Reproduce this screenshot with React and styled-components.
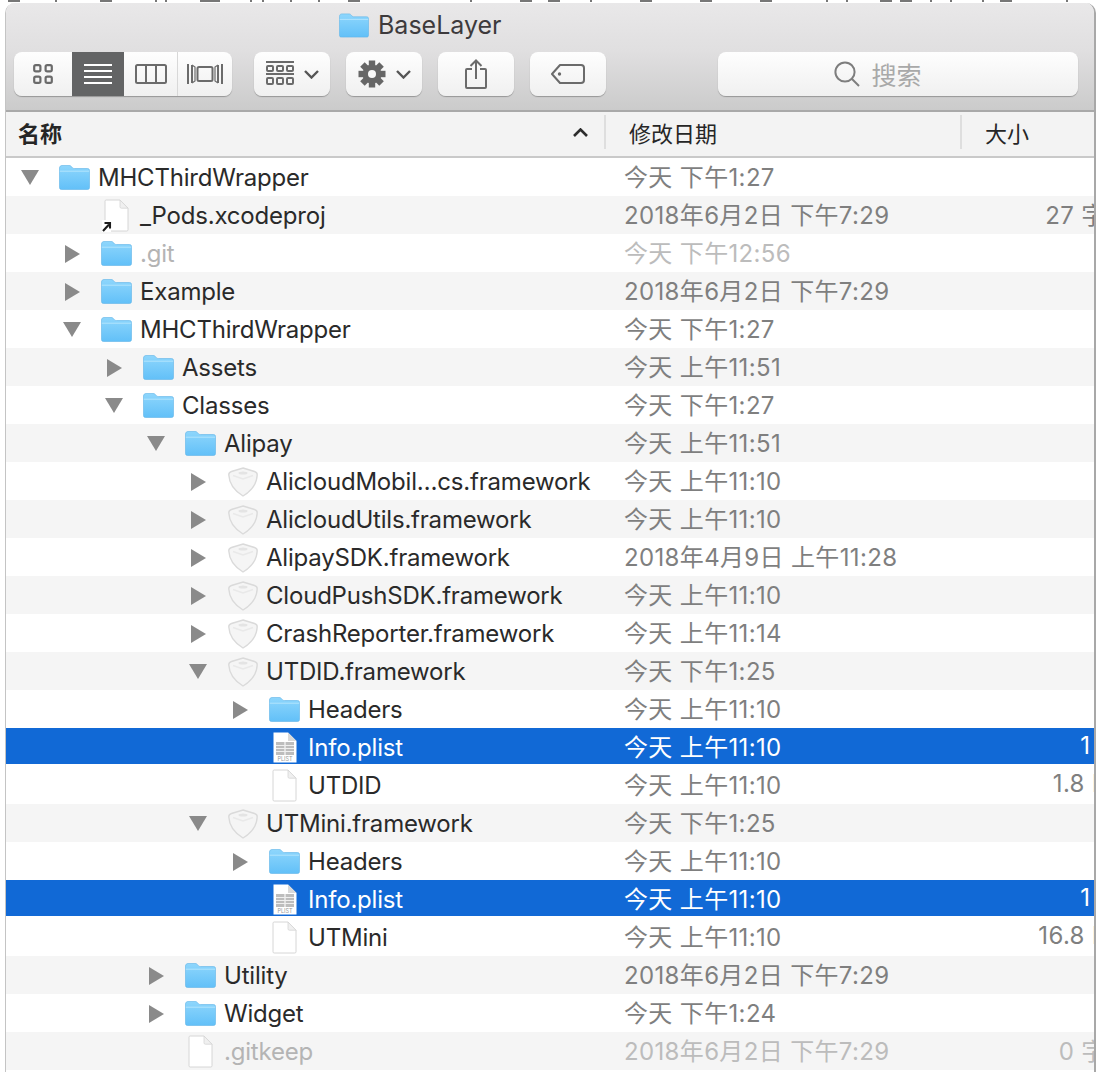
import React from "react";
import styled, { createGlobalStyle } from "styled-components";

const Global = createGlobalStyle`
  html, body { margin: 0; padding: 0; background: #fff; }
  body { font-family: Inter, "Noto Sans CJK SC", sans-serif; }
`;

const Page = styled.div`
  width: 1098px;
  height: 1072px;
  overflow: hidden;
  background: #fff;
  display: flex;
  flex-direction: column;
`;
const Scraps = styled.svg`
  display: block;
  width: 1098px;
  height: 3px;
  flex: none;
`;
const Win = styled.div`
  flex: 1;
  min-height: 0;
  width: 1088px;
  margin-left: 5px;
  border-left: 1px solid #c4c4c4;
  border-right: 2px solid #a8a8a8;
  border-radius: 10px 10px 0 0;
  overflow: hidden;
  background: #fff;
  display: flex;
  flex-direction: column;
`;
const TitleBar = styled.div`
  height: 109px;
  flex: none;
  box-sizing: border-box;
  border-bottom: 2px solid #a9a9a9;
  margin-left: -6px;
  padding-left: 14px;
  background: linear-gradient(180deg, #e9e8e9 0%, #e0dfe0 45%, #cbcbcb 100%);
  display: flex;
  flex-direction: column;
`;
const Title = styled.div`
  height: 49px;
  padding-left: 325px;
  padding-bottom: 5px;
  display: flex;
  align-items: center;
  gap: 9px;
  font-size: 25px;
  color: #3d3a3c;
  box-sizing: border-box;
`;
const Toolbar = styled.div`
  display: flex;
  align-items: flex-start;
  height: 44px;
`;
const Segments = styled.div`
  display: flex;
  width: 218px;
  height: 44px;
  background: linear-gradient(#fefefe, #f0f0f0);
  border-radius: 8px;
  box-shadow: 0 1px 1px rgba(0, 0, 0, 0.28);
  overflow: hidden;
  margin-right: 22px;
`;
const Segment = styled.div`
  width: ${(p) => p.$w}px;
  height: 44px;
  box-sizing: border-box;
  display: flex;
  align-items: center;
  justify-content: center;
  background: ${(p) => (p.$active ? "#636465" : "transparent")};
  color: ${(p) => (p.$active ? "#fff" : "#6b6b6b")};
  border-left: ${(p) => (p.$divided ? "1px solid #d8d8d8" : "none")};
`;
const Btn = styled.div`
  width: 76px;
  height: 44px;
  margin-right: 16px;
  background: linear-gradient(#fefefe, #f0f0f0);
  border-radius: 8px;
  box-shadow: 0 1px 1px rgba(0, 0, 0, 0.28);
  display: flex;
  align-items: center;
  justify-content: center;
  gap: 10px;
  color: #6b6b6b;
`;
const Search = styled(Btn)`
  width: 360px;
  box-sizing: border-box;
  padding-right: 40px;
  margin: 0 0 0 96px;
  gap: 11px;
  font-size: 25px;
  color: #a9a9a9;
`;
const Header = styled.div`
  height: 46px;
  flex: none;
  box-sizing: border-box;
  border-bottom: 2px solid #c9c9c9;
  background: #f3f3f3;
  display: grid;
  grid-template-columns: 600px 356px 1fr;
  font-size: 22px;
  color: #262626;
`;
const HeaderCell = styled.div`
  display: flex;
  align-items: center;
  justify-content: space-between;
  box-sizing: border-box;
  padding: ${(p) => (p.$first ? "0 16px 0 12px" : "0 0 0 23px")};
  margin: 3px 0 7px;
  border-right: ${(p) => (p.$ruled ? "2px solid #dedede" : "none")};
  font-weight: ${(p) => (p.$bold ? 600 : 400)};
`;
const List = styled.div`
  flex: 1;
  min-height: 0;
  overflow: hidden;
`;
const Row = styled.div`
  height: 38px;
  width: 1124px;
  box-sizing: border-box;
  display: grid;
  grid-template-columns: 618px 260px 1fr;
  align-items: center;
  font-size: 24px;
  background: ${(p) =>
    p.$selected
      ? "linear-gradient(#1169d6 36px, #fff 36px)"
      : p.$stripe
      ? "#f5f5f5"
      : "#fff"};
`;
const NameCell = styled.div`
  display: flex;
  align-items: center;
  height: 38px;
  padding-left: ${(p) => 15 + p.$level * 42}px;
  color: ${(p) => (p.$selected ? "#fff" : p.$dim ? "#b4b4b4" : "#2a2a2a")};
`;
const ArrowSlot = styled.div`
  width: 18px;
  height: 18px;
  margin-right: 20px;
  flex: none;
  display: flex;
  align-items: center;
  justify-content: center;
`;
const IconSlot = styled.div`
  width: 31px;
  margin-right: 8px;
  flex: none;
  display: flex;
  align-items: center;
  justify-content: center;
`;
const Name = styled.span`
  white-space: nowrap;
  letter-spacing: -0.2px;
`;
const DateCell = styled.div`
  white-space: nowrap;
  letter-spacing: 0.35px;
  padding-bottom: 4px;
  color: ${(p) => (p.$selected ? "#fff" : p.$dim ? "#bcbcbc" : "#7f7f7f")};
`;
const SizeCell = styled.div`
  white-space: nowrap;
  text-align: right;
  letter-spacing: 0.35px;
  padding-bottom: 4px;
  color: ${(p) => (p.$selected ? "#fff" : p.$dim ? "#bcbcbc" : "#7f7f7f")};
`;

const Folder = ({ w = 31 }) => (
  <svg width={w} height="25" viewBox="0 0 31 25" style={{ display: "block" }}>
    <defs>
      <linearGradient id="fg" x1="0" y1="0" x2="0" y2="1">
        <stop offset="0" stopColor="#8ed6fc" />
        <stop offset="1" stopColor="#62c0f8" />
      </linearGradient>
    </defs>
    <path d="M0.5 3C0.5 1.5 1.5 0.5 3 0.5H10C11.5 0.5 12 1 13 2.2C13.8 3.2 14.4 3.5 15.5 3.5H28.5C29.8 3.5 30.5 4.2 30.5 5.5V22.5C30.5 23.8 29.8 24.5 28.5 24.5H2.5C1.2 24.5 0.5 23.8 0.5 22.5Z" fill="url(#fg)" stroke="#5fb4e8" strokeWidth="0.6" />
    <path d="M0.8 6.2H30.2" stroke="#b2e4fd" strokeWidth="1" />
  </svg>
);

const PageShape = ({ children, stroke = "#d6d6d6" }) => (
  <svg width="25" height="33" viewBox="0 0 25 33" style={{ display: "block", overflow: "visible" }}>
    <path d="M1 2.2C1 1.4 1.4 1 2.2 1H16L24 9.2V30.8C24 31.6 23.6 32 22.8 32H2.2C1.4 32 1 31.6 1 30.8Z" fill="#fff" stroke={stroke} strokeWidth="1" />
    <path d="M16 1V7.8C16 8.7 16.4 9.2 17.3 9.2H24Z" fill="#f0f0f0" stroke={stroke} strokeWidth="0.8" />
    {children}
  </svg>
);

const AliasFile = () => (
  <PageShape>
    <path d="M-2 33V21H7V33Z" fill="#fff" />
    <path d="M-1 32L5 25.5M0.5 24H6V29.5" stroke="#1c1c1c" strokeWidth="2.1" fill="none" />
  </PageShape>
);

const PlistFile = () => (
  <svg width="24" height="31" viewBox="0 0 24 31" style={{ display: "block" }}>
    <path d="M0.5 0.5H15L23.5 9V30.5H0.5Z" fill="#fff" />
    <path d="M15 0.5V9H23.5Z" fill="#d9d9d9" />
    <path d="M3 10H21V23H3Z" fill="#bdbdbd" />
    <path d="M3 13.5H21M3 16.5H21M3 19.5H21" stroke="#efefef" strokeWidth="1" />
    <path d="M12 10V23" stroke="#efefef" strokeWidth="1.4" />
    <text x="12" y="29" textAnchor="middle" fontSize="5.5" fill="#9a9a9a" fontFamily="Inter, sans-serif">PLIST</text>
  </svg>
);

const Shield = () => (
  <svg width="30" height="30" viewBox="0 0 30 30" style={{ display: "block" }}>
    <path d="M15 1L26.5 4.5C28.6 5.2 29.3 6 29.2 8C28.8 15.5 25 23 15 29C5 23 1.2 15.5 .8 8C.7 6 1.4 5.2 3.5 4.5Z" fill="#f5f5f5" stroke="#dadada" strokeWidth="1.4" />
    <path d="M5 8.5L15 12L25 8.5" fill="none" stroke="#e9e9e9" strokeWidth="1.4" />
    <ellipse cx="15" cy="6" rx="4.5" ry="1.5" fill="#e4e4e4" />
  </svg>
);

const Arrow = ({ dir }) =>
  dir === "down" ? (
    <svg width="18" height="15" viewBox="0 0 18 15" style={{ display: "block" }}>
      <path d="M0 0H18L9 15Z" fill="#8a8a8a" />
    </svg>
  ) : (
    <svg width="15" height="18" viewBox="0 0 15 18" style={{ display: "block" }}>
      <path d="M0 0V18L15 9Z" fill="#8a8a8a" />
    </svg>
  );

const IconGrid = () => (
  <svg width="20" height="20" viewBox="0 0 20 20" fill="none" stroke="currentColor" strokeWidth="2.2">
    <rect x="1.2" y="1.2" width="6.2" height="6.2" rx="1.6" />
    <rect x="12.6" y="1.2" width="6.2" height="6.2" rx="1.6" />
    <rect x="1.2" y="12.6" width="6.2" height="6.2" rx="1.6" />
    <rect x="12.6" y="12.6" width="6.2" height="6.2" rx="1.6" />
  </svg>
);
const IconLines = () => (
  <svg width="28" height="20" viewBox="0 0 28 20" stroke="currentColor" strokeWidth="2">
    <path d="M0 1H28M0 7H28M0 13H28M0 19H28" />
  </svg>
);
const IconColumns = () => (
  <svg width="32" height="20" viewBox="0 0 32 20" fill="none" stroke="currentColor" strokeWidth="2">
    <rect x="1" y="1" width="30" height="18" rx="1.5" />
    <path d="M11 1V19M21 1V19" />
  </svg>
);
const IconCover = () => (
  <svg width="36" height="22" viewBox="0 0 36 22" fill="none" stroke="currentColor" strokeWidth="2">
    <path d="M1 1V21M5 2V20M35 1V21M31 2V20" />
    <path d="M5 2L8 4V18L5 20M31 2L28 4V18L31 20" strokeWidth="1.2" />
    <rect x="10.5" y="4" width="15" height="14" rx="1.5" />
  </svg>
);
const IconArrange = () => (
  <svg width="28" height="26" viewBox="0 0 28 26" fill="none" stroke="currentColor" strokeWidth="2">
    <path d="M0 1H28M0 13H28" />
    <rect x="1" y="5" width="6" height="5" rx="1" />
    <rect x="11" y="5" width="6" height="5" rx="1" />
    <rect x="21" y="5" width="6" height="5" rx="1" />
    <rect x="1" y="17" width="6" height="6" rx="1" />
    <rect x="11" y="17" width="6" height="6" rx="1" />
    <rect x="21" y="17" width="6" height="6" rx="1" />
  </svg>
);
const Chevron = () => (
  <svg width="15" height="9" viewBox="0 0 15 9" fill="none" stroke="#555" strokeWidth="2.4">
    <path d="M1 1L7.5 7.5L14 1" />
  </svg>
);
const IconGear = () => {
  const teeth = [0, 45, 90, 135, 180, 225, 270, 315];
  return (
    <svg width="28" height="28" viewBox="0 0 28 28">
      {teeth.map((a) => (
        <rect key={a} x="10.8" y="0.5" width="6.4" height="7" fill="#666" transform={`rotate(${a} 14 14)`} />
      ))}
      <circle cx="14" cy="14" r="9.5" fill="#666" />
      <circle cx="14" cy="14" r="4" fill="#f8f8f8" />
    </svg>
  );
};
const IconShare = () => (
  <svg width="22" height="30" viewBox="0 0 22 30" fill="none" stroke="currentColor" strokeWidth="2">
    <path d="M7 10H2C1.4 10 1 10.4 1 11V28C1 28.6 1.4 29 2 29H20C20.6 29 21 28.6 21 28V11C21 10.4 20.6 10 20 10H15" />
    <path d="M11 20V1.5M5.5 7L11 1.5L16.5 7" />
  </svg>
);
const IconTag = () => (
  <svg width="34" height="20" viewBox="0 0 34 20" fill="none" stroke="currentColor" strokeWidth="2">
    <path d="M9 1H30C32 1 33 2 33 4V16C33 18 32 19 30 19H9L1 10Z" strokeLinejoin="round" />
    <circle cx="8.5" cy="10" r="1.7" fill="currentColor" stroke="none" />
  </svg>
);
const IconSearch = () => (
  <svg width="26" height="26" viewBox="0 0 26 26" fill="none" stroke="#7e7e7e" strokeWidth="2">
    <circle cx="11" cy="11" r="9.6" />
    <path d="M18 18L25 25" />
  </svg>
);
const UpCaret = () => (
  <svg width="15" height="9" viewBox="0 0 15 9" fill="none" stroke="#2d2d2d" strokeWidth="2.6">
    <path d="M1 8L7.5 1.5L14 8" />
  </svg>
);

const T1 = "今天 下午1:27";
const rows = [
  { l: 0, a: "down", i: "folder", n: "MHCThirdWrapper", d: T1 },
  { l: 1, i: "alias", n: "_Pods.xcodeproj", d: "2018年6月2日 下午7:29", s: "27 字节" },
  { l: 1, a: "right", i: "folder", n: ".git", d: "今天 下午12:56", dim: true },
  { l: 1, a: "right", i: "folder", n: "Example", d: "2018年6月2日 下午7:29" },
  { l: 1, a: "down", i: "folder", n: "MHCThirdWrapper", d: T1 },
  { l: 2, a: "right", i: "folder", n: "Assets", d: "今天 上午11:51" },
  { l: 2, a: "down", i: "folder", n: "Classes", d: T1 },
  { l: 3, a: "down", i: "folder", n: "Alipay", d: "今天 上午11:51" },
  { l: 4, a: "right", i: "shield", n: "AlicloudMobil…cs.framework", d: "今天 上午11:10" },
  { l: 4, a: "right", i: "shield", n: "AlicloudUtils.framework", d: "今天 上午11:10" },
  { l: 4, a: "right", i: "shield", n: "AlipaySDK.framework", d: "2018年4月9日 上午11:28" },
  { l: 4, a: "right", i: "shield", n: "CloudPushSDK.framework", d: "今天 上午11:10" },
  { l: 4, a: "right", i: "shield", n: "CrashReporter.framework", d: "今天 上午11:14" },
  { l: 4, a: "down", i: "shield", n: "UTDID.framework", d: "今天 下午1:25" },
  { l: 5, a: "right", i: "folder", n: "Headers", d: "今天 上午11:10" },
  { l: 5, i: "plist", n: "Info.plist", d: "今天 上午11:10", s: "1 KB", sel: true },
  { l: 5, i: "file", n: "UTDID", d: "今天 上午11:10", s: "1.8 MB" },
  { l: 4, a: "down", i: "shield", n: "UTMini.framework", d: "今天 下午1:25" },
  { l: 5, a: "right", i: "folder", n: "Headers", d: "今天 上午11:10" },
  { l: 5, i: "plist", n: "Info.plist", d: "今天 上午11:10", s: "1 KB", sel: true },
  { l: 5, i: "file", n: "UTMini", d: "今天 上午11:10", s: "16.8 MB" },
  { l: 3, a: "right", i: "folder", n: "Utility", d: "2018年6月2日 下午7:29" },
  { l: 3, a: "right", i: "folder", n: "Widget", d: "今天 下午1:24" },
  { l: 3, i: "file", n: ".gitkeep", d: "2018年6月2日 下午7:29", s: "0 字节", dim: true },
];

const icons = {
  folder: <Folder />,
  alias: <AliasFile />,
  plist: <PlistFile />,
  shield: <Shield />,
  file: <PageShape />,
};

const scrapMarks = [8, 55, 100, 155, 165, 200, 208, 250, 262, 290, 318, 348, 470, 520, 548, 590, 640, 700, 760, 826, 846, 880, 900, 930, 950, 982, 1000, 1010, 1066];

export default function App() {
  return (
    <Page>
      <Global />
      <Scraps viewBox="0 0 1098 3">
        {scrapMarks.map((x) => (
          <rect key={x} x={x} y="0" width={x % 4 === 0 ? 12 : 2} height="2" fill="#777" />
        ))}
      </Scraps>
      <Win>
        <TitleBar>
          <Title>
            <Folder w={30} />
            <span>BaseLayer</span>
          </Title>
          <Toolbar>
            <Segments>
              <Segment $w={58}><IconGrid /></Segment>
              <Segment $w={52} $active><IconLines /></Segment>
              <Segment $w={53}><IconColumns /></Segment>
              <Segment $w={55} $divided><IconCover /></Segment>
            </Segments>
            <Btn><IconArrange /><Chevron /></Btn>
            <Btn><IconGear /><Chevron /></Btn>
            <Btn><IconShare /></Btn>
            <Btn><IconTag /></Btn>
            <Search><IconSearch /><span>搜索</span></Search>
          </Toolbar>
        </TitleBar>
        <Header>
          <HeaderCell $first $bold $ruled>
            <span>名称</span>
            <UpCaret />
          </HeaderCell>
          <HeaderCell $ruled><span>修改日期</span></HeaderCell>
          <HeaderCell><span>大小</span></HeaderCell>
        </Header>
        <List>
          {rows.map((r, i) => (
            <Row key={i} $selected={r.sel} $stripe={i % 2 === 1}>
              <NameCell $level={r.l} $selected={r.sel} $dim={r.dim}>
                <ArrowSlot>{r.a ? <Arrow dir={r.a} /> : null}</ArrowSlot>
                <IconSlot>{icons[r.i]}</IconSlot>
                <Name>{r.n}</Name>
              </NameCell>
              <DateCell $selected={r.sel} $dim={r.dim}>{r.d}</DateCell>
              <SizeCell $selected={r.sel} $dim={r.dim}>{r.s}</SizeCell>
            </Row>
          ))}
        </List>
      </Win>
    </Page>
  );
}
